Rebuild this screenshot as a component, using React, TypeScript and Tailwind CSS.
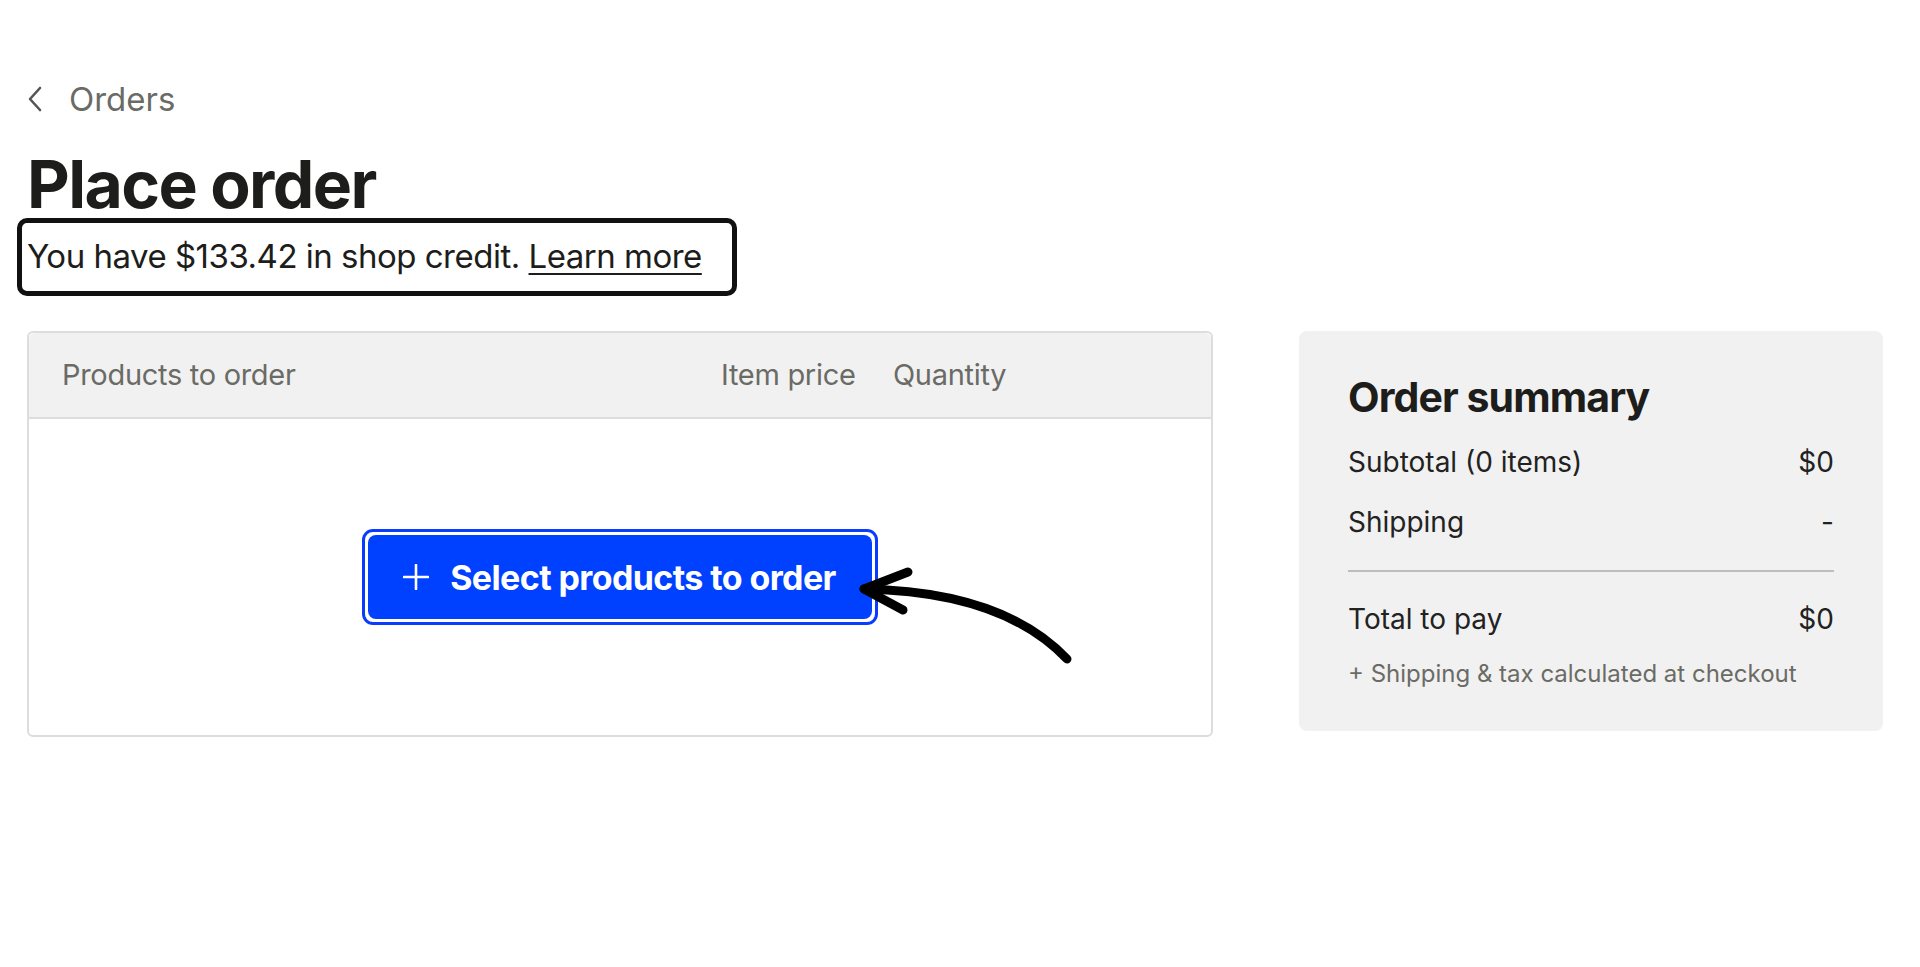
import React from "react";

const font = { fontFamily: "Inter, 'Noto Sans', sans-serif" };

const SummaryRow = ({ label, value }: { label: string; value: string }) => (
  <div className="flex justify-between items-center text-[28px] leading-[40px] text-[#222222]">
    <span>{label}</span>
    <span>{value}</span>
  </div>
);

const App = () => {
  return (
    <div className="min-h-screen bg-white pl-[27px] pt-[78px]" style={font}>
      <a className="flex items-center gap-[26px] text-[#6b6b66] text-[33px] leading-[42px]">
        <svg width="16" height="26" viewBox="0 0 16 26" fill="none">
          <polyline points="13,2 3,13 13,24" stroke="#555" strokeWidth="2.6" strokeLinecap="round" strokeLinejoin="round" />
        </svg>
        <span>Orders</span>
      </a>

      <h1 className="mt-[31px] text-[66px] leading-[66px] font-bold tracking-[-1.6px] text-[#1d1d1b]">
        Place order
      </h1>

      <div className="-ml-[10px] mt-[1px] w-[720px] h-[78px] border-[5px] border-[#111] rounded-[10px] flex items-center pl-[5px]">
        <p className="text-[33px] text-[#1d1d1b] tracking-[-0.5px]">
          You have $133.42 in shop credit.{" "}
          <a className="underline underline-offset-[5px] decoration-[2px]">Learn more</a>
        </p>
      </div>

      <div className="flex gap-[86px] mt-[35px]">
        {/* products table */}
        <div className="relative w-[1186px] h-[406px] border-2 border-[#dddddd] rounded-[6px] flex flex-col">
          <div className="h-[86px] bg-[#f1f1f1] border-b-2 border-[#dddddd] rounded-t-[6px] flex items-center text-[29px] text-[#6b6b66] tracking-[-0.3px]">
            <span className="pl-[33px] w-[692px]">Products to order</span>
            <span className="w-[172px]">Item price</span>
            <span>Quantity</span>
          </div>
          <div className="flex-1 flex items-center justify-center">
            <div className="border-[3px] border-[#0a3cff] rounded-[11px] p-[3px] bg-white">
              <button className="flex items-center gap-[21px] bg-[#0040ff] text-white rounded-[8px] h-[84px] pl-[35px] pr-[36px] text-[34px] font-bold tracking-[-0.6px]">
                <svg width="26" height="26" viewBox="0 0 26 26" fill="none">
                  <path d="M13 1v24M1 13h24" stroke="#fff" strokeWidth="2.6" strokeLinecap="round" />
                </svg>
                Select products to order
              </button>
            </div>
          </div>

          {/* hand drawn arrow */}
          <svg
            className="absolute left-[792px] top-[222px]"
            width="270"
            height="130"
            viewBox="0 0 270 130"
            fill="none"
          >
            <path
              d="M246 104 C 210 66, 150 36, 43 34"
              stroke="#000"
              strokeWidth="9"
              strokeLinecap="round"
            />
            <path
              d="M87 17 L 43 34 L 82 55"
              stroke="#000"
              strokeWidth="9"
              strokeLinecap="round"
              strokeLinejoin="round"
            />
          </svg>
        </div>

        {/* order summary */}
        <div className="w-[584px] h-[400px] bg-[#f1f1f1] rounded-[8px] px-[49px] pt-[41px]">
          <h2 className="text-[41px] font-bold tracking-[-0.9px] text-[#1d1d1b] leading-[50px]">
            Order summary
          </h2>
          <div className="mt-[20px] flex flex-col gap-[20px]">
            <SummaryRow label="Subtotal (0 items)" value="$0" />
            <SummaryRow label="Shipping" value="-" />
          </div>
          <div className="mt-[28px] border-t-2 border-[#bdbdbd]" />
          <div className="mt-[27px]">
            <SummaryRow label="Total to pay" value="$0" />
          </div>
          <p className="mt-[19px] text-[24px] leading-[32px] text-[#6b6b66]">
            + Shipping &amp; tax calculated at checkout
          </p>
        </div>
      </div>
    </div>
  );
};

export default App;
